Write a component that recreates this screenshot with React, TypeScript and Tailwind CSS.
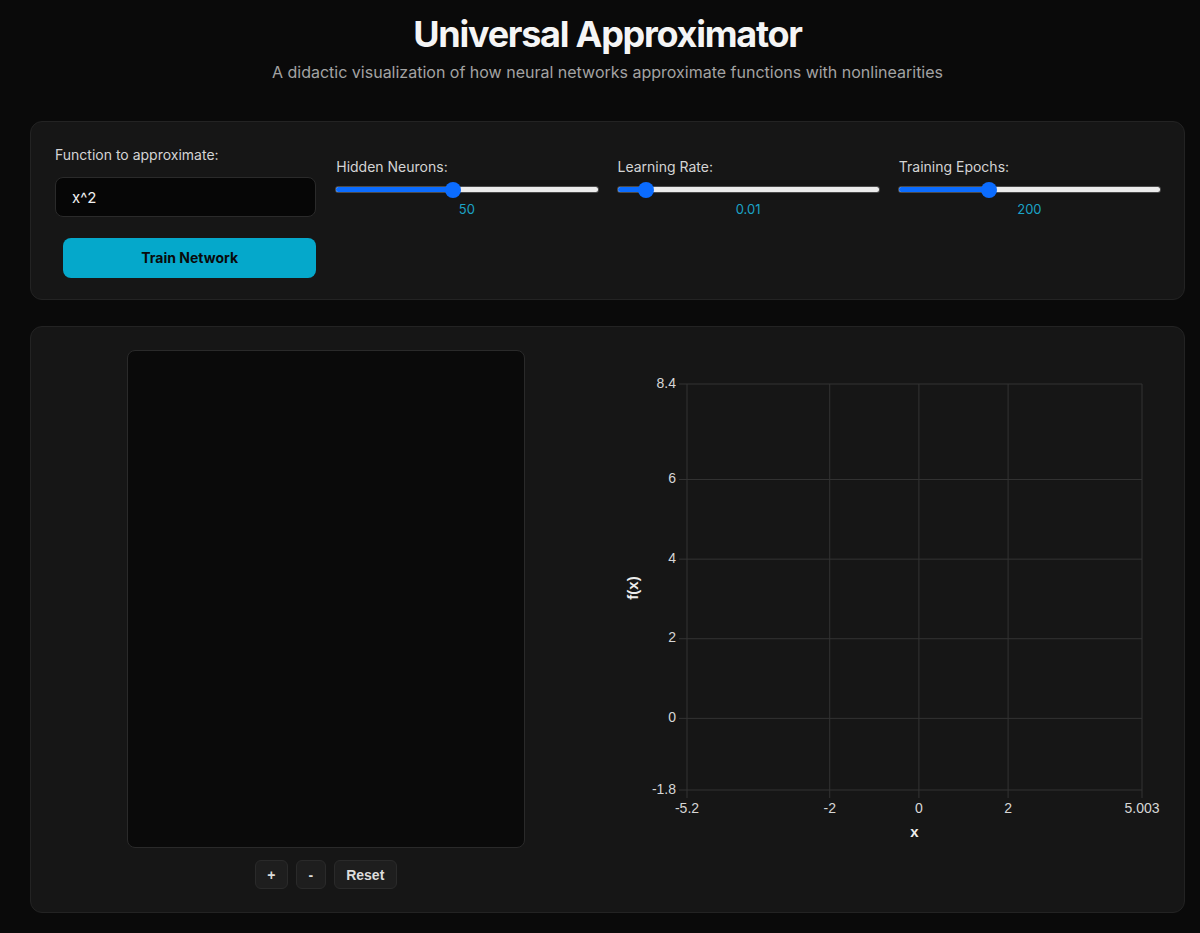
import { useState } from 'react';

const PLOT = { left: 69, right: 524, top: 34, bottom: 440 };
const X_MIN = -5.2;
const X_MAX = 5.003;
const Y_MIN = -1.8;
const Y_MAX = 8.4;

const sx = (v: number) => PLOT.left + ((v - X_MIN) / (X_MAX - X_MIN)) * (PLOT.right - PLOT.left);
const sy = (v: number) => PLOT.top + ((Y_MAX - v) / (Y_MAX - Y_MIN)) * (PLOT.bottom - PLOT.top);

const xTicks = [
  { v: -5.2, label: '-5.2' },
  { v: -2, label: '-2' },
  { v: 0, label: '0' },
  { v: 2, label: '2' },
  { v: 5.003, label: '5.003' },
];
const yTicks = [
  { v: 8.4, label: '8.4' },
  { v: 6, label: '6' },
  { v: 4, label: '4' },
  { v: 2, label: '2' },
  { v: 0, label: '0' },
  { v: -1.8, label: '-1.8' },
];

const Slider = ({ label, value, pct }: { label: string; value: string; pct: number }) => (
  <div className="mt-3 flex flex-col">
    <label className="text-sm leading-5 text-[#d4d4d4]">{label}</label>
    <div className="relative mt-[5px] h-4">
      <div className="absolute left-0 right-0 top-[5px] h-[5px] rounded-full bg-[#ececec] ring-1 ring-[#9a9a9a]/40" />
      <div
        className="absolute left-0 top-[5px] h-[5px] rounded-full bg-[#0b6cff]"
        style={{ width: `${pct}%` }}
      />
      <div
        className="absolute top-0 h-4 w-4 -translate-x-1/2 rounded-full bg-[#0b6cff]"
        style={{ left: `${pct}%` }}
      />
    </div>
    <span className="mt-[2px] text-center text-[13px] leading-[18px] text-[#1ba3c6]">{value}</span>
  </div>
);

const Chart = () => (
  <svg width={544} height={500} className="block" style={{ fontFamily: '"Liberation Sans", Arial, sans-serif' }}>
    {yTicks.map((t) => (
      <g key={`y${t.label}`}>
        <line x1={PLOT.left - 8} x2={PLOT.right} y1={sy(t.v)} y2={sy(t.v)} stroke="#333333" strokeWidth={1} />
        <text x={PLOT.left - 11} y={sy(t.v)} dominantBaseline="middle" textAnchor="end" fontSize={14} fill="#d6d6d6">
          {t.label}
        </text>
      </g>
    ))}
    {xTicks.map((t) => (
      <g key={`x${t.label}`}>
        <line x1={sx(t.v)} x2={sx(t.v)} y1={PLOT.top} y2={PLOT.bottom + 8} stroke="#333333" strokeWidth={1} />
        <text x={sx(t.v)} y={PLOT.bottom + 19} dominantBaseline="middle" textAnchor="middle" fontSize={14} fill="#d6d6d6">
          {t.label}
        </text>
      </g>
    ))}
    <text x={(PLOT.left + PLOT.right) / 2} y={483} dominantBaseline="middle" textAnchor="middle" fontSize={15} fontWeight={700} fill="#ececec">
      x
    </text>
    <text
      x={16}
      y={238}
      dominantBaseline="middle"
      textAnchor="middle"
      fontSize={15}
      fontWeight={700}
      fill="#ececec"
      transform="rotate(-90 16 238)"
    >
      f(x)
    </text>
  </svg>
);

export default function App() {
  const [fn, setFn] = useState('x^2');

  return (
    <div className="min-h-[933px] bg-[#0a0a0a] pt-[14px] font-['Inter',_'Noto_Sans',_sans-serif]">
      <div className="ml-[30px] w-[1155px]">
        <h1 className="text-center text-4xl leading-10 font-bold tracking-[-0.035em] text-[#f5f5f5]">Universal Approximator</h1>
        <p className="mt-[6px] text-center text-base leading-6 text-[#a3a3a3]">
          A didactic visualization of how neural networks approximate functions with nonlinearities
        </p>

        <div className="mt-[37px] rounded-xl border border-[#232323] bg-[#161616] px-6 pt-[23px] pb-[21px]">
          <div className="grid grid-cols-4 items-start gap-5">
            <div className="flex flex-col">
              <label className="text-sm leading-5 text-[#d4d4d4]">Function to approximate:</label>
              <input
                value={fn}
                onChange={(e) => setFn(e.target.value)}
                className="mt-3 h-10 rounded-lg border border-[#2a2a2a] bg-[#060606] px-4 text-[15px] text-[#f0f0f0] outline-none"
              />
              <button className="mt-[21px] ml-2 h-10 rounded-lg bg-[#05a8cb] text-sm font-bold text-[#0a0a0a]">
                Train Network
              </button>
            </div>
            <Slider label="Hidden Neurons:" value="50" pct={44.5} />
            <Slider label="Learning Rate:" value="0.01" pct={11} />
            <Slider label="Training Epochs:" value="200" pct={34.5} />
          </div>
        </div>

        <div className="mt-[26px] rounded-xl border border-[#232323] bg-[#161616] px-[23px] pt-[23px] pb-[23px]">
          <div className="grid grid-cols-2 gap-5">
            <div className="flex flex-col items-center">
              <div className="h-[498px] w-[398px] rounded-lg border border-[#2a2a2a] bg-[#0a0a0a]" />
              <div className="mt-3 flex gap-2 font-['Liberation_Sans',_Arial,_sans-serif] text-sm font-bold text-[#dcdcdc]">
                <button className="h-[29px] w-[33px] rounded-md border border-[#2a2a2a] bg-[#1e1e1e]">+</button>
                <button className="h-[29px] w-[30px] rounded-md border border-[#2a2a2a] bg-[#1e1e1e]">-</button>
                <button className="h-[29px] w-[63px] rounded-md border border-[#2a2a2a] bg-[#1e1e1e]">Reset</button>
              </div>
            </div>
            <div>
              <Chart />
            </div>
          </div>
        </div>
      </div>
    </div>
  );
}
